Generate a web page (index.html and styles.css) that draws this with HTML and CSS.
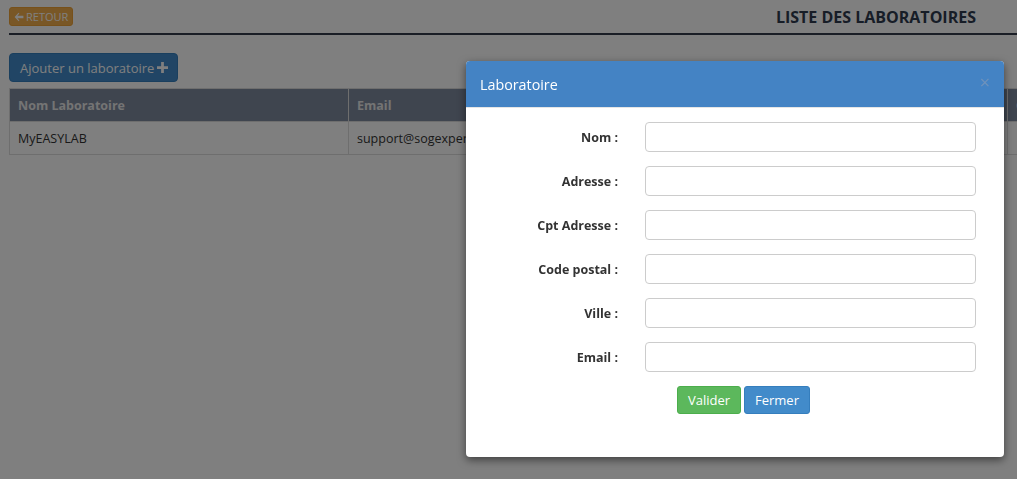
FILE: index.html
```html
<!DOCTYPE html>
<html lang="fr">
<head>
<meta charset="utf-8">
<title>Liste des laboratoires</title>
<link rel="stylesheet" href="styles.css">
</head>
<body>
<div class="page">
  <div class="topbar">
    <button class="btn-retour"><svg class="arrow" viewBox="0 0 10 10" width="10" height="10"><path d="M4.6 0.8 L0.6 5 L4.6 9.2 L5.4 8.4 L3.4 6.2 L9.4 6.2 L9.4 3.8 L3.4 3.8 L5.4 1.6 Z" fill="currentColor"/></svg>RETOUR</button>
    <h1 class="title">LISTE DES LABORATOIRES</h1>
  </div>
  <div class="content">
    <button class="btn-add">Ajouter un laboratoire <svg class="plus" viewBox="0 0 12 12" width="11" height="11"><path d="M4.5 0 H7.5 V4.5 H12 V7.5 H7.5 V12 H4.5 V7.5 H0 V4.5 H4.5 Z" fill="currentColor"/></svg></button>
    <table class="labs">
      <thead>
        <tr><th class="c1">Nom Laboratoire</th><th class="c2">Email</th><th class="c3">Contact</th></tr>
      </thead>
      <tbody>
        <tr><td>MyEASYLAB</td><td>support@sogexpert.fr</td><td></td></tr>
      </tbody>
    </table>
  </div>
</div>

<div class="backdrop"></div>

<div class="modal">
  <div class="modal-header">
    <span class="modal-title">Laboratoire</span>
    <span class="close">×</span>
  </div>
  <div class="modal-body">
    <div class="row"><label>Nom :</label><input type="text"></div>
    <div class="row"><label>Adresse :</label><input type="text"></div>
    <div class="row"><label>Cpt Adresse :</label><input type="text"></div>
    <div class="row"><label>Code postal :</label><input type="text"></div>
    <div class="row"><label>Ville :</label><input type="text"></div>
    <div class="row"><label>Email :</label><input type="text"></div>
    <div class="actions">
      <button class="btn-valider">Valider</button>
      <button class="btn-fermer">Fermer</button>
    </div>
  </div>
</div>
</body>
</html>
```

FILE: styles.css
```css
html, body {
  margin: 0;
  padding: 0;
  width: 1017px;
  height: 479px;
  overflow: hidden;
  background: #fff;
  font-family: "Open Sans", "Liberation Sans", sans-serif;
  color: #333;
}

.page {
  padding-left: 9px;
}

.topbar {
  display: flex;
  align-items: center;
  justify-content: space-between;
  height: 35px;
  padding-right: 41px;
  border-bottom: 2px solid #343c4c;
  box-sizing: border-box;
}

.btn-retour {
  display: flex;
  align-items: center;
  gap: 2px;
  height: 19px;
  padding: 0 4px;
  background: #f2ae4c;
  color: #fff;
  border: 1px solid #eea236;
  border-radius: 3px;
  font-family: inherit;
  font-size: 11px;
  line-height: 1;
}

.arrow { display: block; }

.title {
  margin: 0;
  font-size: 16px;
  font-weight: 700;
  color: #2e3a4e;
}

.content {
  padding-top: 18px;
}

.btn-add {
  display: flex;
  align-items: center;
  gap: 3px;
  height: 29px;
  padding: 0 9px 0 10px;
  background: #428bca;
  color: #fff;
  border: 1px solid #357ebd;
  border-radius: 4px;
  font-family: inherit;
  font-size: 13px;
}

.plus { display: block; }

.labs {
  margin-top: 6px;
  width: 1300px;
  border-collapse: collapse;
  font-size: 12.5px;
}

.labs th, .labs td {
  border: 1px solid #dcdcdc;
  text-align: left;
  padding: 0 8px;
  height: 32px;
}

.labs th {
  background: #7f8a9f;
  color: #e8e8e8;
  font-weight: 700;
}

.labs .c1 { width: 322px; }
.labs .c2 { width: 642px; }

.labs td { color: #333; }

.backdrop {
  position: fixed;
  inset: 0;
  background: rgba(0, 0, 0, 0.5);
}

.modal {
  position: absolute;
  left: 466px;
  top: 61px;
  width: 538px;
  height: 396px;
  background: #fff;
  border-radius: 4px;
  box-shadow: 0 3px 9px rgba(0, 0, 0, 0.5);
  overflow: hidden;
}

.modal-header {
  display: flex;
  align-items: center;
  justify-content: space-between;
  height: 47px;
  padding: 0 14px;
  background: #4483c4;
  border-bottom: 1px solid #e5e5e5;
  box-sizing: border-box;
}

.modal-title {
  color: #fff;
  font-size: 14.3px;
}

.close {
  color: #6f92bb;
  font-size: 18px;
  line-height: 1;
  margin-top: -4px;
}

.modal-body {
  padding-top: 14px;
  display: flex;
  flex-direction: column;
  gap: 14px;
}

.row {
  display: grid;
  grid-template-columns: 152px 331px;
  column-gap: 27px;
  align-items: center;
}

.row label {
  text-align: right;
  font-size: 12.5px;
  font-weight: 700;
  color: #333;
}

.row input {
  height: 30px;
  box-sizing: border-box;
  border: 1px solid #ccc;
  border-radius: 4px;
  margin: 0;
  padding: 0 8px;
  font-family: inherit;
}

.actions {
  display: flex;
  gap: 3px;
  padding-left: 211px;
}

.actions button {
  height: 28px;
  border-radius: 3px;
  color: #fff;
  font-family: inherit;
  font-size: 13px;
  padding: 0;
}

.btn-valider {
  width: 64px;
  background: #5cb85c;
  border: 1px solid #4cae4c;
}

.btn-fermer {
  width: 66px;
  background: #428bca;
  border: 1px solid #357ebd;
}
```
